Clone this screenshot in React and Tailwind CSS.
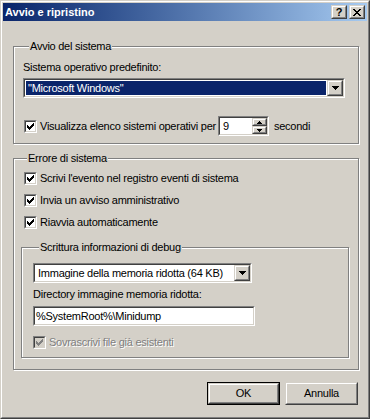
const sunkenOuter = "border border-t-[#808080] border-l-[#808080] border-r-white border-b-white";
const sunkenInner = "border border-t-[#404040] border-l-[#404040] border-r-[#d4d0c8] border-b-[#d4d0c8]";
const raisedOuter = "border border-t-[#d4d0c8] border-l-[#d4d0c8] border-r-[#404040] border-b-[#404040]";
const raisedInner = "border border-t-white border-l-white border-r-[#808080] border-b-[#808080]";

function Sunken({ className = "", inner = "", children }) {
  return (
    <div className={`flex ${sunkenOuter} ${className}`}>
      <div className={`flex min-w-0 flex-1 ${sunkenInner} ${inner}`}>{children}</div>
    </div>
  );
}

function Raised({ className = "", inner = "", children }) {
  return (
    <div className={`flex ${raisedOuter} ${className}`}>
      <div className={`flex min-w-0 flex-1 items-center justify-center bg-[#d4d0c8] ${raisedInner} ${inner}`}>
        {children}
      </div>
    </div>
  );
}

function ArrowDown() {
  return (
    <svg width="7" height="4" viewBox="0 0 7 4" shapeRendering="crispEdges">
      <rect x="0" y="0" width="7" height="1" fill="#000" />
      <rect x="1" y="1" width="5" height="1" fill="#000" />
      <rect x="2" y="2" width="3" height="1" fill="#000" />
      <rect x="3" y="3" width="1" height="1" fill="#000" />
    </svg>
  );
}

function SmallArrow({ up }) {
  return (
    <svg width="5" height="3" viewBox="0 0 5 3" shapeRendering="crispEdges" className={up ? "rotate-180" : ""}>
      <rect x="0" y="0" width="5" height="1" fill="#000" />
      <rect x="1" y="1" width="3" height="1" fill="#000" />
      <rect x="2" y="2" width="1" height="1" fill="#000" />
    </svg>
  );
}

function Combo({ className = "", text, selected }) {
  return (
    <Sunken className={`h-[20px] ${className}`} inner="bg-white">
      <div className="flex min-w-0 flex-1 p-[1px]">
        {selected ? (
          <div className="flex flex-1 items-center bg-[#0a246a] pl-[2px] text-white">{text}</div>
        ) : (
          <div className="flex flex-1 items-center whitespace-nowrap pl-[2px]">{text}</div>
        )}
      </div>
      <Raised className="w-[16px]">
        <ArrowDown />
      </Raised>
    </Sunken>
  );
}

function Checkbox({ checked = true, disabled }) {
  return (
    <span className={`flex h-[13px] w-[13px] shrink-0 ${sunkenOuter}`}>
      <span
        className={`flex flex-1 items-center justify-center ${sunkenInner} ${disabled ? "bg-[#d4d0c8]" : "bg-white"}`}
      >
        {checked && (
          <svg width="7" height="7" viewBox="0 0 7 7" shapeRendering="crispEdges">
            <g fill={disabled ? "#808080" : "#000"}>
              <rect x="6" y="0" width="1" height="1" />
              <rect x="5" y="1" width="2" height="1" />
              <rect x="0" y="2" width="1" height="1" />
              <rect x="4" y="2" width="3" height="1" />
              <rect x="0" y="3" width="2" height="1" />
              <rect x="3" y="3" width="3" height="1" />
              <rect x="0" y="4" width="5" height="1" />
              <rect x="1" y="5" width="3" height="1" />
              <rect x="2" y="6" width="1" height="1" />
            </g>
          </svg>
        )}
      </span>
    </span>
  );
}

function CheckRow({ label, className = "", disabled }) {
  return (
    <div className={`flex h-[13px] items-center ${className}`}>
      <Checkbox disabled={disabled} />
      <span className={`ml-[3px] whitespace-nowrap ${disabled ? "text-[#808080] [text-shadow:1px_1px_0_#fff]" : ""}`}>
        {label}
      </span>
    </div>
  );
}

function Group({ label, className = "", children }) {
  return (
    <div className={`flex flex-col border border-[#808080] shadow-[inset_1px_1px_0_#fff,1px_1px_0_#fff] ${className}`}>
      <div className="-mt-[7px] ml-[6px] h-[13px] w-fit bg-[#d4d0c8] px-[1px]">{label}</div>
      {children}
    </div>
  );
}

export default function App() {
  return (
    <div className="flex h-[419px] w-[370px] flex-col overflow-hidden border border-t-[#d4d0c8] border-l-[#d4d0c8] border-r-[#404040] border-b-[#404040] bg-[#d4d0c8] font-['Liberation_Sans',Arial,sans-serif] text-[11px] leading-[13px] tracking-[-0.25px] text-black">
      <div className="flex flex-1 flex-col border border-t-white border-l-white border-r-[#808080] border-b-[#808080] px-[1px] pt-[1px]">
        {/* title bar */}
        <div className="flex h-[18px] items-center bg-linear-to-r from-[#0a246a] to-[#a6caf0] pl-[2px] pr-[2px]">
          <span className="flex-1 font-bold tracking-normal text-white">Avvio e ripristino</span>
          <div className="flex gap-[2px]">
            <Raised className="h-[14px] w-[16px]">
              <span className="text-[11px] leading-[11px] font-bold">?</span>
            </Raised>
            <Raised className="h-[14px] w-[16px]">
              <svg width="8" height="7" viewBox="0 0 8 7" shapeRendering="crispEdges">
                <g fill="#000">
                  <rect x="0" y="0" width="2" height="1" />
                  <rect x="6" y="0" width="2" height="1" />
                  <rect x="1" y="1" width="2" height="1" />
                  <rect x="5" y="1" width="2" height="1" />
                  <rect x="2" y="2" width="4" height="1" />
                  <rect x="3" y="3" width="2" height="1" />
                  <rect x="2" y="4" width="4" height="1" />
                  <rect x="1" y="5" width="2" height="1" />
                  <rect x="5" y="5" width="2" height="1" />
                  <rect x="0" y="6" width="2" height="1" />
                  <rect x="6" y="6" width="2" height="1" />
                </g>
              </svg>
            </Raised>
          </div>
        </div>

        {/* Avvio del sistema */}
        <Group label="Avvio del sistema" className="mt-[25px] ml-[10px] w-[346px] pl-[9px] pb-[7px]">
          <div className="mt-[8px]">Sistema operativo predefinito:</div>
          <Combo className="mt-[4px] w-[322px]" text={'"Microsoft Windows"'} selected />
          <div className="mt-[18px] flex h-[20px] items-center">
            <span className="ml-[1px] flex items-center">
              <Checkbox />
            </span>
            <span className="ml-[3px] w-[175px] whitespace-nowrap">Visualizza elenco sistemi operativi per</span>
            <Sunken className="ml-[3px] h-[20px] w-[51px]" inner="bg-white">
              <div className="flex flex-1 items-center pl-[3px]">9</div>
              <div className="flex w-[15px] flex-col">
                <Raised className="h-[8px]">
                  <SmallArrow up />
                </Raised>
                <Raised className="h-[8px]">
                  <SmallArrow />
                </Raised>
              </div>
            </Sunken>
            <span className="ml-[5px]">secondi</span>
          </div>
        </Group>

        {/* Errore di sistema */}
        <Group label="Errore di sistema" className="mt-[14px] ml-[10px] w-[346px] pl-[7px] pb-[11px]">
          <CheckRow className="mt-[7px] ml-[3px]" label="Scrivi l'evento nel registro eventi di sistema" />
          <CheckRow className="mt-[9px] ml-[3px]" label="Invia un avviso amministrativo" />
          <CheckRow className="mt-[9px] ml-[3px]" label="Riavvia automaticamente" />

          <Group label="Scrittura informazioni di debug" className="mt-[18px] w-[328px] pl-[11px] pb-[8px]">
            <Combo className="mt-[9px] w-[219px]" text="Immagine della memoria ridotta (64 KB)" />
            <div className="mt-[5px]">Directory immagine memoria ridotta:</div>
            <Sunken className="mt-[5px] h-[20px] w-[222px]" inner="items-center bg-white pl-[1px]">
              %SystemRoot%\Minidump
            </Sunken>
            <CheckRow className="mt-[10px]" label="Sovrascrivi file già esistenti" disabled />
          </Group>
        </Group>

        {/* buttons */}
        <div className="mt-[12px] ml-[10px] flex w-[346px] justify-end gap-[5px] pr-[1px]">
          <div className="flex h-[23px] w-[73px] border border-black">
            <Raised className="flex-1">OK</Raised>
          </div>
          <Raised className="h-[23px] w-[73px]">Annulla</Raised>
        </div>
      </div>
    </div>
  );
}
